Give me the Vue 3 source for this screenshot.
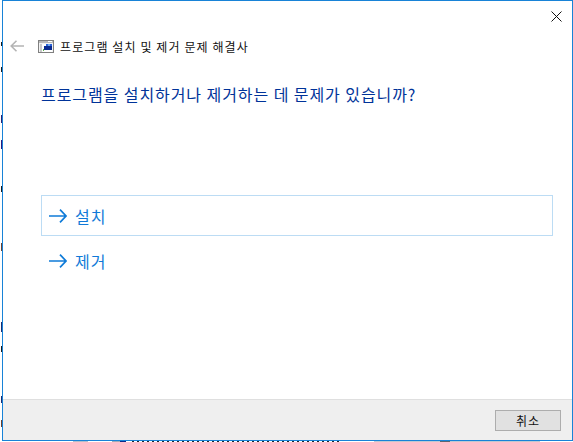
<template>
  <div class="desk">
    <div class="window">
      <div class="titlebar">
        <svg class="close" width="11" height="11" viewBox="0 0 11 11"><path d="M.5.5l10 10M10.500 .5l-10 10" stroke="#111" fill="none" /></svg>
      </div>
      <div class="nav">
        <svg class="back" width="14" height="12" viewBox="0 0 14 12"><path d="M1 6h13M6.500 .7L1.200 6l5.300 5.300" stroke="#b4b4b4" stroke-width="1.600" fill="none" /></svg>
        <svg class="app-icon" width="16" height="13" viewBox="0 0 16 13">
          <rect x=".5" y=".5" width="15" height="12" fill="#f2f2f2" stroke="#808080" />
          <rect x="1" y="1" width="14" height="2" fill="#b9b9b9" />
          <rect x="10" y="1" width="4" height="1" fill="#fff" />
          <rect x="2" y="4" width="12" height="8" fill="#fff" />
          <rect x="2" y="4" width="2" height="8" fill="#c9c9c9" />
          <rect x="8" y="4" width="6" height="5" fill="#2a62d8" />
          <rect x="6" y="6" width="8" height="4" fill="#0b2b8f" />
          <rect x="10" y="4" width="2" height="2" fill="#6fa8ee" />
          <rect x="5" y="9" width="1" height="2" fill="#58b04a" />
        </svg>
        <span class="nav-title">프로그램 설치 및 제거 문제 해결사</span>
      </div>
      <div class="body">
        <h1>프로그램을 설치하거나 제거하는 데 문제가 있습니까?</h1>
        <ul class="options">
          <li v-for="item in items" :key="item.label" class="option" :class="{ 'option--hover': item.hover }">
            <svg width="18" height="14" viewBox="0 0 18 14"><path d="M0 7h17M11 .7L17 7l-6 6.300" stroke="#0f7bd8" stroke-width="1.700" fill="none" /></svg>
            <span>{{ item.label }}</span>
          </li>
        </ul>
      </div>
      <div class="footer">
        <button class="cancel">취소</button>
      </div>
    </div>
  </div>
</template>

<script setup>
const items = [
  { label: '설치', hover: true },
  { label: '제거', hover: false },
];
</script>

<style>
html, body { margin: 0; background: #fff; }
</style>

<style scoped>
.desk {
  box-sizing: border-box;
  width: 573px;
  height: 442px;
  padding: 0 0 1px 2px;
  overflow: hidden;
  font-family: "Noto Sans CJK KR", "Liberation Sans", sans-serif;
  /* bits of the desktop showing behind the window */
  background:
    repeating-linear-gradient(to right, #23262c 0 2px, #fff 2px 5px) 132px 100% / 208px 1px no-repeat,
    linear-gradient(to right, #fff 73px, #b5bec9 73px, #b5bec9 88px, #fff 88px, #fff 112px, #a2abb6 112px, #a2abb6 120px, #0a2a8a 120px, #0a2a8a 126px, #fff 126px, #fff 374px, #c2c8d0 374px, #c2c8d0 440px, #5d6772 440px, #5d6772 450px, #c2c8d0 450px, #c2c8d0 540px, #fff 540px) 0 100% / 100% 1px no-repeat,
    linear-gradient(to bottom, #fff 42px, #1a1a1a 42px, #1a1a1a 46px, #fff 46px, #fff 67px, #1a1a1a 67px, #1a1a1a 72px, #fff 72px, #fff 115px, #2a1f70 115px, #2a1f70 123px, #fff 123px, #fff 140px, #2a1a80 140px, #2a1a80 149px, #fff 149px, #fff 186px, #1a1a1a 186px, #1a1a1a 192px, #fff 192px, #fff 243px, #6a4030 243px, #6a4030 251px, #fff 251px, #fff 322px, #1a2a70 322px, #1a2a70 332px, #fff 332px, #fff 346px, #1a1a1a 346px, #1a1a1a 352px, #fff 352px, #fff 396px, #1a2a70 396px, #1a2a70 403px, #fff 403px, #fff 420px, #6a4030 420px, #6a4030 427px, #fff 427px) 1px 0 / 1px 100% no-repeat,
    #fff;
}
.window {
  box-sizing: border-box;
  height: 441px;
  display: flex;
  flex-direction: column;
  border: 1px solid #1883d7;
  background: #fff;
}
.titlebar {
  height: 30px;
  display: flex;
  justify-content: flex-end;
  padding: 10px 10px 0 0;
  box-sizing: border-box;
}
.nav {
  display: flex;
  align-items: center;
  height: 30px;
  padding-left: 7px;
}
.back { margin-right: 14px; }
.app-icon { margin-right: 6px; }
.nav-title {
  font-size: 12px;
  letter-spacing: 1.1px;
  color: #111;
}
.body {
  flex: 1;
  padding: 0 19px 0 38px;
}
h1 {
  margin: 21px 0 0;
  font-size: 16px;
  font-weight: 400;
  line-height: 24px;
  letter-spacing: .93px;
  color: #003399;
}
.options {
  list-style: none;
  margin: 89px 0 0;
  padding: 0;
}
.option {
  box-sizing: border-box;
  height: 41px;
  display: flex;
  align-items: center;
  gap: 8px;
  padding-left: 7px;
  border: 1px solid transparent;
  margin-bottom: 4px;
  font-size: 16px;
  letter-spacing: 1px;
  color: #1079d8;
}
.option--hover { border-color: #bcdcf4; }
.footer {
  height: 41px;
  box-sizing: border-box;
  display: flex;
  justify-content: flex-end;
  align-items: center;
  padding-right: 11px;
  background: #efefef;
  border-top: 1px solid #dfdfdf;
}
.cancel {
  width: 66px;
  height: 21px;
  padding: 0;
  border: 1px solid #adadad;
  background: #e1e1e1;
  font: 12px "Noto Sans CJK KR", "Liberation Sans", sans-serif;
  letter-spacing: 1px;
  color: #111;
}
</style>
